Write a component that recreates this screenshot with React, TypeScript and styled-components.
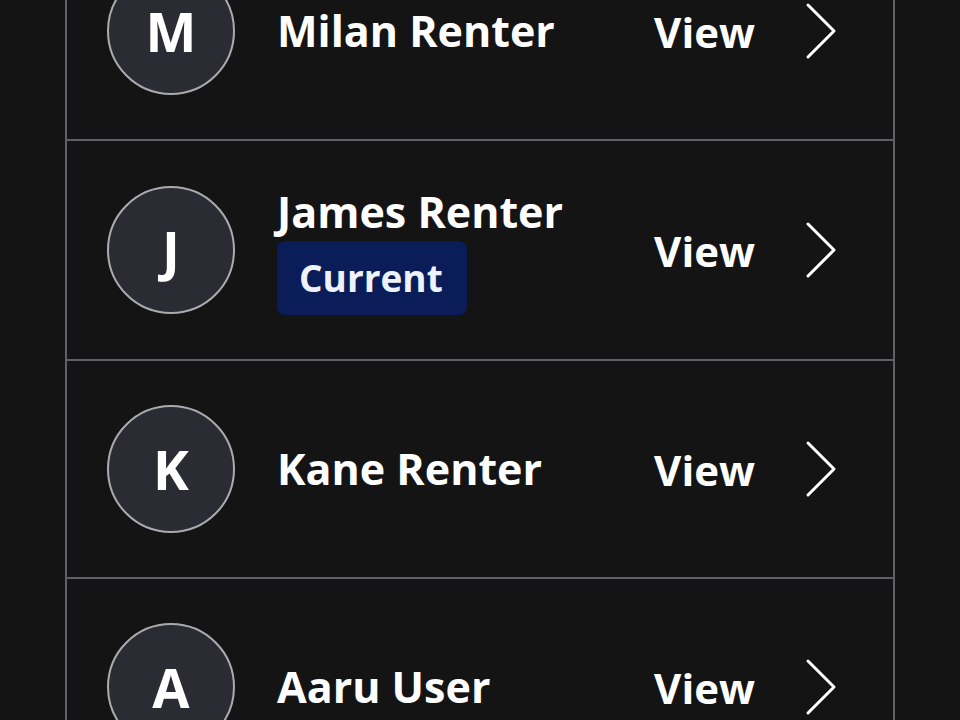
import styled, { createGlobalStyle } from "styled-components";

const GlobalStyle = createGlobalStyle`
  html, body {
    margin: 0;
    padding: 0;
    background: #141414;
    overflow: hidden;
  }
  body {
    font-family: "Open Sans", "Noto Sans", sans-serif;
    color: #fff;
  }
`;

type Person = { name: string; current?: boolean };

const people: Person[] = [
  { name: "Milan Renter" },
  { name: "James Renter", current: true },
  { name: "Kane Renter" },
  { name: "Aaru User" },
];

const App = function () {
  return (
    <>
      <GlobalStyle />
      <Page>
        <List>
          {people.map((p) => (
            <Row key={p.name}>
              <Avatar>{p.name.charAt(0)}</Avatar>
              <Info>
                <Name>{p.name}</Name>
                {p.current && <Badge>Current</Badge>}
              </Info>
              <ViewLink>View</ViewLink>
              <Chevron viewBox="0 0 32 58" aria-hidden>
                <polyline points="3,3 29,29 3,55" />
              </Chevron>
            </Row>
          ))}
        </List>
      </Page>
    </>
  );
};

export default App;

const Page = styled.div`
  width: 960px;
  height: 720px;
  overflow: hidden;
  padding: 0 65px;
  box-sizing: border-box;
`;

const List = styled.div`
  margin-top: -79px;
  border-left: 2px solid #606065;
  border-right: 2px solid #606065;
`;

const Row = styled.div`
  display: flex;
  align-items: center;
  padding: 44px 56px 44px 40px;
  border-top: 2px solid #606065;
  min-height: 128px;
`;

const Avatar = styled.div`
  flex: none;
  width: 124px;
  height: 124px;
  border-radius: 50%;
  border: 2px solid #ababaf;
  background: #2b2b33;
  display: flex;
  align-items: center;
  justify-content: center;
  font-size: 54px;
  font-weight: 700;
`;

const Info = styled.div`
  flex: 1;
  display: flex;
  flex-direction: column;
  align-items: flex-start;
  margin-left: 42px;
  gap: 2px;
`;

const Name = styled.div`
  font-size: 43px;
  font-weight: 700;
  line-height: 54px;
`;

const Badge = styled.div`
  background: #0b1d58;
  border-radius: 8px;
  padding: 8px 24px 8px 22px;
  font-size: 37px;
  font-weight: 700;
  line-height: 58px;
  color: #eef2fa;
`;

const ViewLink = styled.div`
  font-size: 42px;
  font-weight: 700;
  margin-right: 50px;
`;

const Chevron = styled.svg`
  width: 32px;
  height: 58px;
  fill: none;
  stroke: #fff;
  stroke-width: 3;
  stroke-linecap: round;
  stroke-linejoin: round;
`;
